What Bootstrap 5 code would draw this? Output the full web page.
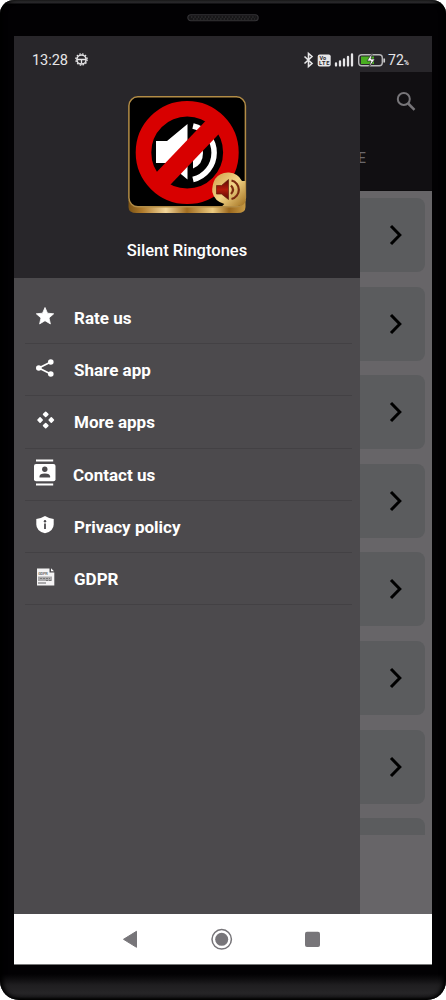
<!DOCTYPE html>
<html lang="en">
<head>
<meta charset="utf-8">
<meta name="viewport" content="width=device-width, initial-scale=1">
<title>Silent Ringtones</title>
<link rel="stylesheet" href="https://cdn.jsdelivr.net/npm/bootstrap@5.3.0/dist/css/bootstrap.min.css">
<style>
html,body{height:1000px;overflow:hidden}
body{background:#fff;font-family:Roboto,"Liberation Sans",sans-serif}
svg{display:block;flex:none}
.phone{width:446px;height:1000px;padding:0 14px;border-radius:14px 14px 19px 19px;background:linear-gradient(#555457 0,#3b3a3d 2px,#2c2b2e 3px,#020103 4px,#020103 974px,#0b0a0c 978px,#1f1e20 985px,#262527 993px,#1d1c1e 997px,#050505 1000px);box-shadow:inset 3px 0 4px #000,inset -3px 0 4px #000}
.speaker-row{height:36px;padding-top:14px}
.screen{height:929px;background:#28262a}
.statusbar{height:36px;color:#e6e5e7;padding:12px 23px 0 18px;background:#28262a}
.clock{font-size:14.6px;line-height:25px;font-weight:400;letter-spacing:-.1px}
.charge{font-size:14px;line-height:25px}
.charge span{font-size:7px;font-weight:700}
.drawer{width:346px;background:#4c4a4d}
.drawer-head{height:206px;background:#28262a;padding-top:23px;color:#fff}
.app-title{font-size:16.5px;line-height:20px;font-weight:500;margin-top:26px}
.menu{padding:14px 8px 0 11px;--bs-list-group-bg:transparent}
.menu-row{height:52.2px;border-bottom:1px solid #434144;color:#fff;font-size:17px;font-weight:700;line-height:20px;padding-left:8px}
.menu-row svg{margin-top:-3px}
.menu-row span{margin-left:17px;padding-top:1px}
.page{width:72px;background:#676568}
.page-head{height:119px;background:#110f12;border-bottom:1px solid #0d0b0e;overflow:hidden}
.tab-text{font-size:14px;line-height:16px;color:#69676b;margin-left:-2px;margin-top:38px}
.tones{height:644px;padding-top:7px;overflow:hidden}
.tone{height:74px;width:65px;margin-bottom:14.6px;background:#5b5c5e;border-radius:0 8px 8px 0;flex:none;padding-left:28px}
.navkeys{height:51px;border-bottom:1px solid #777;background:#fff}
</style>
</head>
<body>
<div class="phone">
  <div class="speaker-row d-flex justify-content-center">
    <svg width="72" height="8"><rect x=".8" y=".8" width="70.4" height="6" rx="3" fill="#171618" stroke="#343336" stroke-width="1.1"/><path d="M4 3h65M6 5h62" stroke="#3e3d40" stroke-width=".9" stroke-dasharray="1.4 2"/></svg>
  </div>
  <div class="screen d-flex flex-column">
    <header class="statusbar d-flex align-items-start">
      <span class="clock">13:28</span>
      <svg style="margin-left:7px" width="13" height="25" viewBox="0 0 13 25"><g fill="none" stroke="#e6e5e7"><circle cx="6.5" cy="11.5" r="4.6" stroke-width="1.5"/><circle cx="6.500" cy="11.500" r="5.700" stroke-width="1.200" stroke-dasharray="1.600 1.380"/><path d="M2 11.500h9M6.500 11.500v4" stroke-width="1.300"/></g></svg>
      <div class="d-flex ms-auto">
        <svg width="85" height="25" viewBox="302 47 85 25"><path d="M303.500 55.500l7.500 7-3.500 3V52.500l3.500 3-7.500 7" fill="none" stroke="#e6e5e7" stroke-width="1.600"/><rect x="316.700" y="53.500" width="13" height="12" rx="2" fill="#e6e5e7"/><text x="318.600" y="58.800" font-size="5.500" font-weight="700" fill="#28262a">Vo</text><text x="317.900" y="64.200" font-size="5.600" font-weight="700" fill="#28262a" textLength="10.500">LTE</text><path d="M335 62.500v2M339 60.500v4M343 58.300v6.200M347 56v8.500M351 53.500v11" stroke="#e6e5e7" stroke-width="2.300" stroke-linecap="round"/><rect x="357.700" y="53.700" width="23.600" height="11" rx="3" fill="none" stroke="#b9b8ba" stroke-width="1.400"/><path d="M360 55.500h13v7.500h-13z" fill="#49ae20"/><path d="M371.500 51.500l-5.500 8.500h4l-2.500 7 6.500-9h-4z" fill="#fff" stroke="#28262a" stroke-width=".7"/><path d="M383.200 57.500v4" stroke="#cfcfd0" stroke-width="1.700"/></svg>
        <div class="charge">72<span>%</span></div>
      </div>
    </header>
    <div class="d-flex flex-grow-1">
      <aside class="drawer">
        <div class="drawer-head d-flex flex-column align-items-center">
          <svg width="120" height="120" viewBox="127 95 120 120">
            <defs><linearGradient id="gold"><stop stop-color="#7a5214"/><stop offset=".12" stop-color="#b07b2c"/><stop offset=".32" stop-color="#f3d69a"/><stop offset=".5" stop-color="#a06c20"/><stop offset=".72" stop-color="#edcb80"/><stop offset=".86" stop-color="#9a671d"/><stop offset="1" stop-color="#c99b45"/></linearGradient><linearGradient id="seal" x2="1" y2="1"><stop stop-color="#cf9d46"/><stop offset=".5" stop-color="#f2d487"/><stop offset="1" stop-color="#a3711f"/></linearGradient><linearGradient id="ruby" x2="0" y2="1"><stop stop-color="#5a0a05"/><stop offset=".5" stop-color="#b31b0b"/><stop offset="1" stop-color="#5a0a05"/></linearGradient></defs>
            <path d="M128.500 200h117v7q0 6-8 6h-101q-8 0-8-6z" fill="url(#gold)"/>
            <rect x="128.900" y="96.800" width="116.500" height="110" rx="9" fill="#000" stroke="#b28c46" stroke-width="1.500"/>
            <g fill="#fff"><path d="M156 141h11l20.500-17v55.500l-20-16.500h-11.500z"/><path d="M193 137.500q10 4 10 15.500t-10 15.500z"/></g>
            <path d="M193 126a27.500 27.500 0 010 53.500" fill="none" stroke="#fff" stroke-width="5.500"/>
            <path d="M216 123.500L161 181" stroke="#d80000" stroke-width="18.500"/><circle cx="187.200" cy="152.500" r="43.700" fill="none" stroke="#d80000" stroke-width="15.600"/>
            <path d="M215 179q5-7 14-6.500 9 .5 13 8.500h3.300v19q0 6-8 6h-15l2-2q-10-3-12-12-.5-7 2.700-13z" fill="url(#seal)"/>
            <path d="M216.500 185.500h5l7-6v20l-7-5.500h-5z" fill="url(#ruby)" stroke="#61200b" stroke-width=".7"/><path d="M231 185.500q4 4 0 8.500M231.500 180.500a9.500 9.500 0 010 18.500" fill="none" stroke="#7b2a0f" stroke-width="2.200"/>
          </svg>
          <div class="app-title">Silent Ringtones</div>
        </div>
        <nav class="menu list-group list-group-flush">
          <div class="menu-row d-flex align-items-center"><svg width="24" height="26" viewBox="0 0 24 26" fill="#fff"><path d="M12 4.500l2.500 5.700 6.200.6-4.700 4.100 1.400 6-5.400-3.200-5.400 3.200 1.400-6-4.700-4.100 6.200-.6z" stroke="#fff" stroke-width=".8" stroke-linejoin="round"/></svg><span>Rate us</span></div>
          <div class="menu-row d-flex align-items-center"><svg width="24" height="26" viewBox="0 0 24 26" fill="#fff"><path d="M17.800 7L5.800 13l12 6" fill="none" stroke="#fff" stroke-width="1.700"/><circle cx="17.800" cy="7" r="2.800"/><circle cx="5.800" cy="13" r="2.800"/><circle cx="17.800" cy="19" r="2.800"/></svg><span>Share app</span></div>
          <div class="menu-row d-flex align-items-center"><svg width="24" height="26" viewBox="0 0 24 26" fill="#fff" stroke="#fff" stroke-width="1.600" stroke-linejoin="round"><path d="M12.700 5.300l2.100 2.100-2.100 2.100-2.100-2.100zM12.700 16.500l2.100 2.100-2.100 2.100-2.100-2.100zM7.100 10.900l2.100 2.100-2.100 2.100L5 13zM18.300 10.900l2.100 2.100-2.100 2.100-2.100-2.100z"/></svg><span>More apps</span></div>
          <div class="menu-row d-flex align-items-center"><svg width="24" height="28" viewBox="0 0 24 28"><path d="M3 1.500h17.200M3 25.500h17.200" stroke="#fff" stroke-width="2"/><rect x="1" y="5" width="21.500" height="17.200" rx="2" fill="#fff"/><circle cx="11.800" cy="10.300" r="2.700" fill="#4c4a4d"/><path d="M6.500 18.500v-1q0-3 5.300-3t5.300 3v1z" fill="#4c4a4d"/></svg><span style="margin-left:16px">Contact us</span></div>
          <div class="menu-row d-flex align-items-center"><svg width="24" height="26" viewBox="0 0 24 26"><path d="M12 4q4 2.500 8.700 3v5.500q0 6.500-8.700 8.800-8.700-2.300-8.700-8.800V7Q8 6.500 12 4z" fill="#fff"/><circle cx="12" cy="9.300" r="1.200" fill="#4c4a4d"/><path d="M12 11.600v5.500" stroke="#4c4a4d" stroke-width="1.800"/></svg><span>Privacy policy</span></div>
          <div class="menu-row d-flex align-items-center"><svg width="24" height="26" viewBox="0 0 24 26"><path d="M4 4.500h12.500v4h4.800v13H4z" fill="#f4f3f4"/><path d="M18 4.200v3h3" fill="#fff"/><text x="5.200" y="10.700" font-size="4" textLength="9.500" font-weight="700" fill="#777">GDPR</text><path d="M5 12.500h14v4.500h-14zM5 18h8v2H5z" fill="#aaa9ab"/><path d="M7 14.500h10M13 16.500h6" stroke="#777" stroke-dasharray="2 1"/></svg><span>GDPR</span></div>
        </nav>
      </aside>
      <main class="page">
        <div class="page-head">
          <svg class="ms-auto" style="margin-right:16px" width="20" height="40" viewBox="0 0 20 40"><g fill="none" stroke="#777579" stroke-width="2"><circle cx="7.800" cy="27" r="6"/><path d="M12.200 31.500l6.300 6.300" stroke-width="2.500"/></g></svg>
          <div class="tab-text">E</div>
        </div>
        <div class="tones d-flex flex-column" id="tones"></div>
      </main>
    </div>
    <footer class="navkeys d-flex">
      <svg width="418" height="50" viewBox="14 914 418 50" fill="#777579"><path d="M123.500 939.300l13-8v16z" stroke="#777579" stroke-linejoin="round"/><circle cx="221.700" cy="939.300" r="9.700" fill="none" stroke="#777579" stroke-width="1.500"/><circle cx="221.700" cy="939.300" r="6.500"/><rect x="305" y="931.700" width="15" height="15.200" rx="2"/></svg>
    </footer>
  </div>
</div>
<script>
const arrow='<svg width="16" height="24" viewBox="0 0 16 24"><path d="M3 3l8.800 9L3 21" fill="none" stroke="#000" stroke-width="3"/></svg>';
document.getElementById('tones').innerHTML=Array.from({length:7},()=>'<div class="tone d-flex align-items-center">'+arrow+'</div>').join('')+'<div class="tone" style="height:17px;border-radius:0 8px 0 0"></div>';
</script>
<script src="https://cdn.jsdelivr.net/npm/bootstrap@5.3.0/dist/js/bootstrap.bundle.min.js"></script>
</body>
</html>
